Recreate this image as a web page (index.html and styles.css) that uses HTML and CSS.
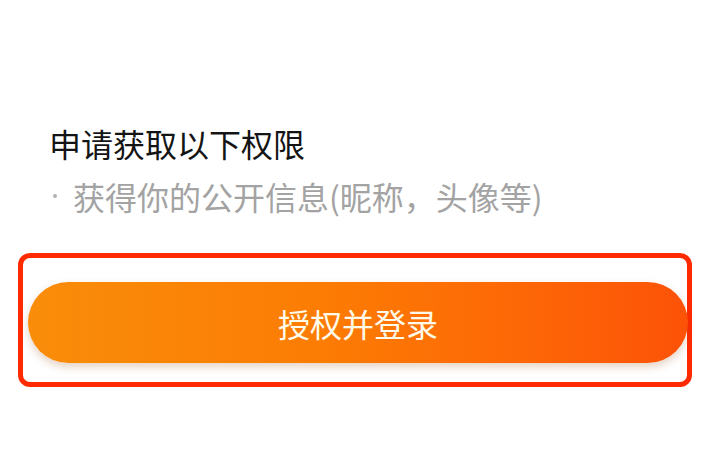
FILE: index.html
```html
<!DOCTYPE html>
<html lang="zh-CN">
<head>
  <meta charset="UTF-8">
  <title>授权登录</title>
  <link rel="stylesheet" href="styles.css">
</head>
<body>

  <div class="auth">
    <h2 class="auth-title">申请获取以下权限</h2>
    <p class="auth-item">获得你的公开信息(昵称，头像等)</p>

    <div class="highlight">
      <button class="login-btn">授权并登录</button>
    </div>
  </div>

</body>
</html>
```

FILE: styles.css
```css
* {
  box-sizing: border-box;
}

body {
  margin: 0;
  padding: 0;
  background: #ffffff;
  font-family: "Noto Sans CJK SC", "Noto Sans", sans-serif;
}

.auth {
  padding-top: 121px;
}

.auth-title {
  margin: 0;
  padding-left: 49px;
  font-size: 32px;
  font-weight: normal;
  line-height: 44px;
  color: #141414;
}

.auth-item {
  display: flex;
  align-items: center;
  gap: 16px;
  margin: 9px 0 0;
  padding-left: 53px;
  font-size: 32px;
  line-height: 44px;
  color: #a3a3a3;
}

.auth-item::before {
  content: '';
  width: 4px;
  height: 4px;
  border-radius: 50%;
  background: #b3b3b3;
}

.highlight {
  width: 674px;
  height: 134px;
  margin: 35px 0 0 18px;
  padding: 24px 0 0 5px;
  border: 5px solid #ff2a00;
  border-radius: 12px;
}

.login-btn {
  display: block;
  width: 660px;
  height: 81px;
  border: none;
  border-radius: 41px;
  background: linear-gradient(90deg, #f98d0a 0%, #fc7c04 45%, #fd6706 75%, #fc5207 100%);
  box-shadow: 0 4px 8px rgba(150, 80, 20, 0.25);
  color: #fffbea;
  font-family: "Noto Sans CJK SC", "Noto Sans", sans-serif;
  font-size: 32px;
  padding: 0;
  cursor: pointer;
}
```
